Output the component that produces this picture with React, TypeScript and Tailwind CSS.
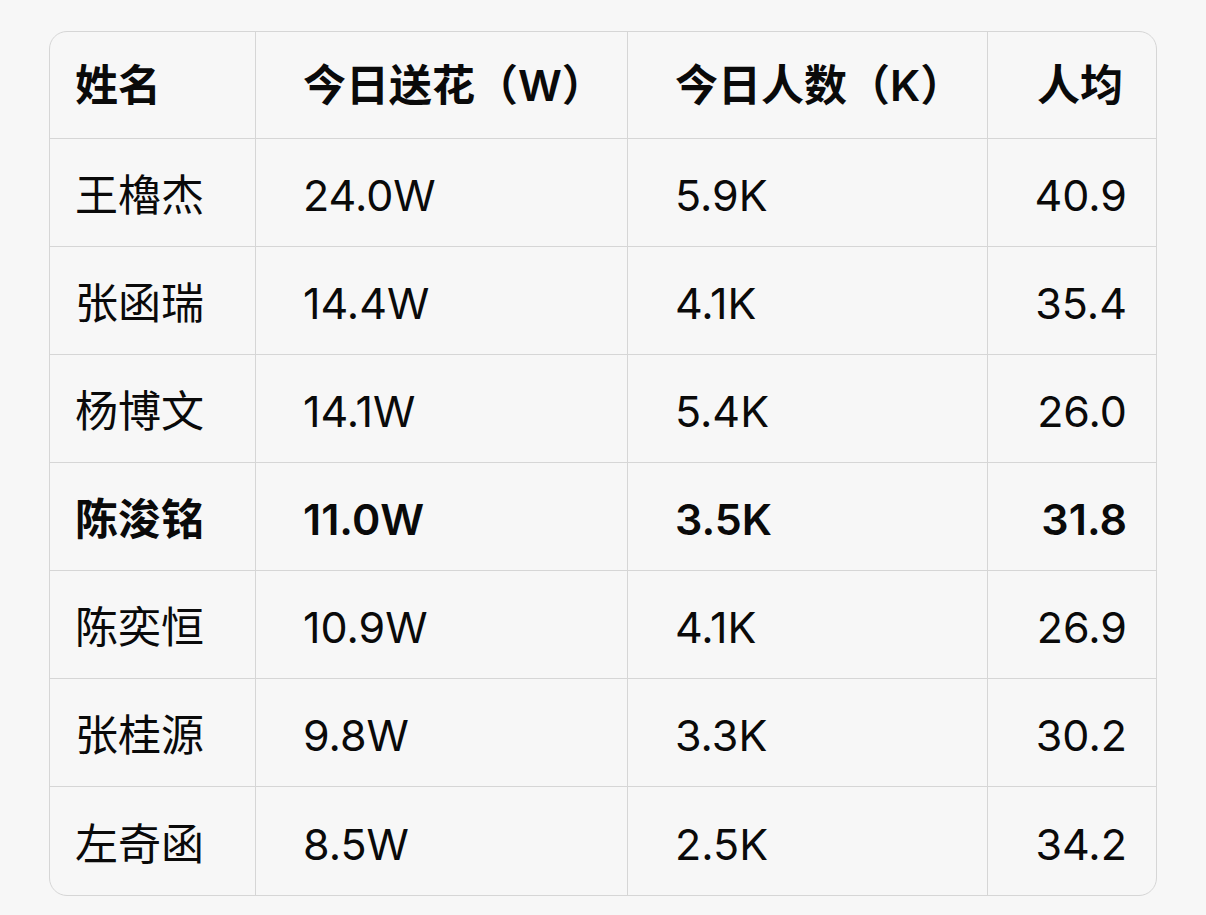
import React from "react";

const rows: { name: string; flowers: string; people: string; avg: string; bold?: boolean }[] = [
  { name: "王櫓杰", flowers: "24.0W", people: "5.9K", avg: "40.9" },
  { name: "张函瑞", flowers: "14.4W", people: "4.1K", avg: "35.4" },
  { name: "杨博文", flowers: "14.1W", people: "5.4K", avg: "26.0" },
  { name: "陈浚铭", flowers: "11.0W", people: "3.5K", avg: "31.8", bold: true },
  { name: "陈奕恒", flowers: "10.9W", people: "4.1K", avg: "26.9" },
  { name: "张桂源", flowers: "9.8W", people: "3.3K", avg: "30.2" },
  { name: "左奇函", flowers: "8.5W", people: "2.5K", avg: "34.2" },
];

export default function App() {
  return (
    <div
      className="min-h-[915px] w-[1206px] bg-[#f7f7f7] pt-[31px] pl-[49px] text-[#0a0a0a]"
      style={{ fontFamily: 'Inter, "Noto Sans CJK SC", "Noto Sans", sans-serif' }}
    >
      <div className="w-[1108px] overflow-hidden rounded-[18px] border border-[#d6d6d6] bg-[#f7f7f7]">
        <table className="w-full border-separate border-spacing-0 text-[43px] leading-none">
          <colgroup>
            <col className="w-[206px]" />
            <col className="w-[372px]" />
            <col className="w-[360px]" />
            <col />
          </colgroup>
          <thead>
            <tr className="h-[107px]">
              <th className="border-b border-r border-[#d6d6d6] pl-[25px] text-left font-semibold">姓名</th>
              <th className="border-b border-r border-[#d6d6d6] pl-[47px] text-left font-semibold">今日送花（W）</th>
              <th className="border-b border-r border-[#d6d6d6] pl-[47px] text-left font-semibold">今日人数（K）</th>
              <th className="border-b border-[#d6d6d6] pr-[33px] text-right font-semibold">人均</th>
            </tr>
          </thead>
          <tbody>
            {rows.map((r, i) => {
              const last = i === rows.length - 1;
              const b = last ? "" : "border-b";
              const w = r.bold ? "font-semibold" : "font-normal";
              return (
                <tr key={r.name} className="h-[108px]">
                  <td className={`${b} border-r border-[#d6d6d6] pl-[25px] pt-[6px] ${w}`}>{r.name}</td>
                  <td className={`${b} border-r border-[#d6d6d6] pl-[47px] pt-[6px] ${w}`}>{r.flowers}</td>
                  <td className={`${b} border-r border-[#d6d6d6] pl-[47px] pt-[6px] ${w}`}>{r.people}</td>
                  <td className={`${b} border-[#d6d6d6] pr-[29px] pt-[6px] text-right ${w}`}>{r.avg}</td>
                </tr>
              );
            })}
          </tbody>
        </table>
      </div>
    </div>
  );
}
